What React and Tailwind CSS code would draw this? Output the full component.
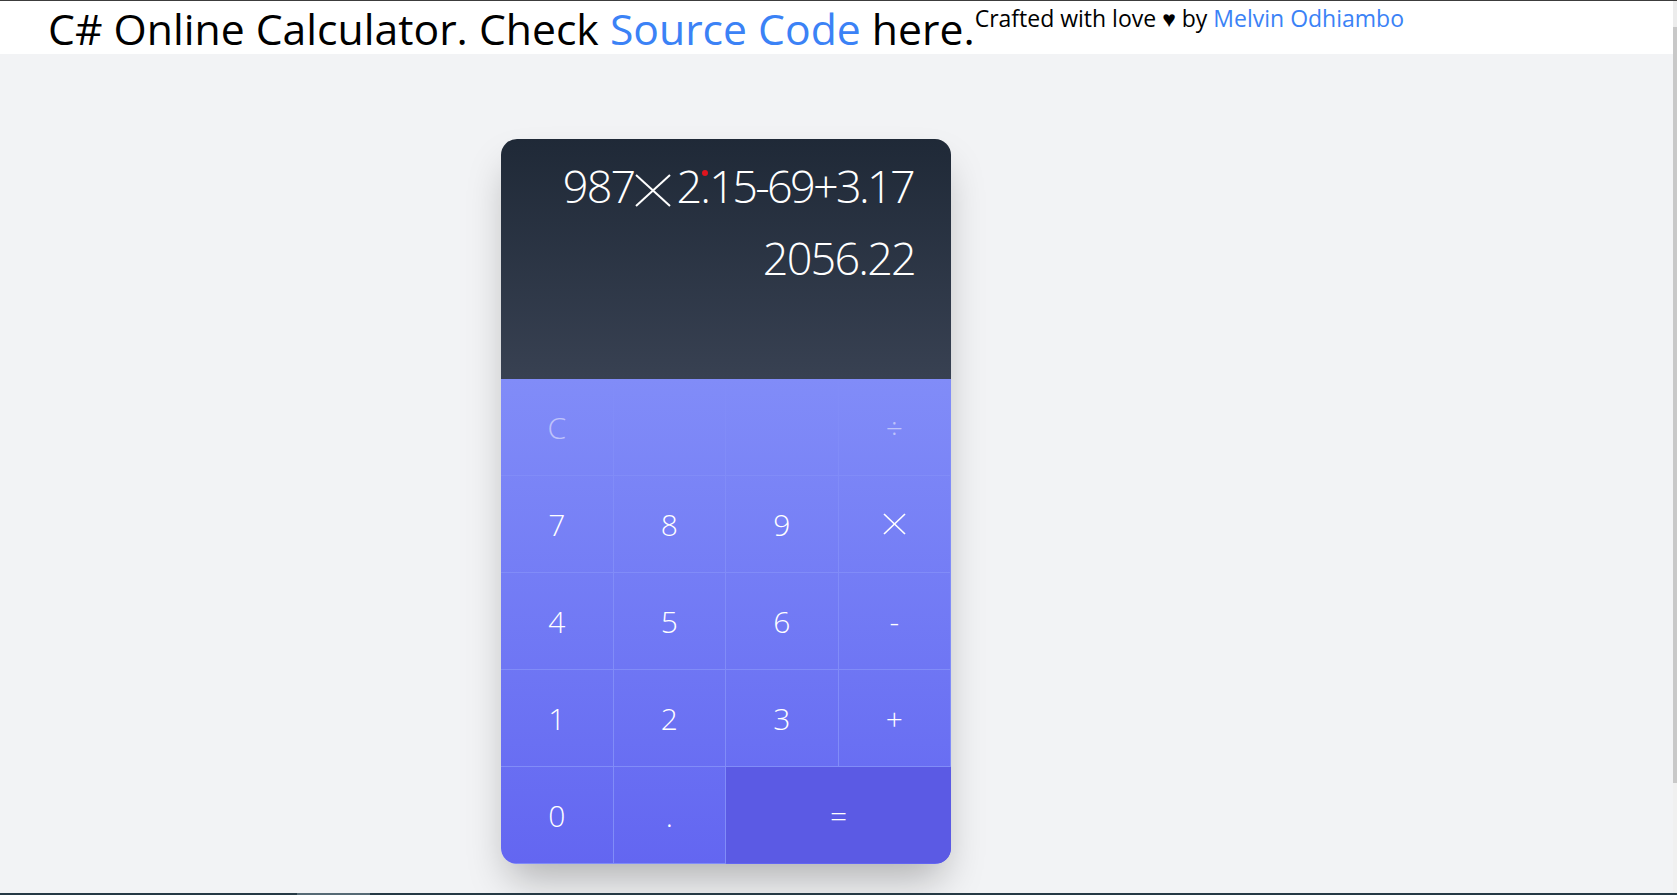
import React from "react";

const Times = ({ className, w, h, stroke }) => (
  <svg
    width={w}
    height={h}
    viewBox={`0 0 ${w} ${h}`}
    className={className}
    fill="none"
    stroke="currentColor"
    strokeWidth={stroke}
    strokeLinecap="butt"
  >
    <line x1="1" y1="1" x2={w - 1} y2={h - 1} />
    <line x1={w - 1} y1="1" x2="1" y2={h - 1} />
  </svg>
);

const keys = [
  { label: "C", faded: true },
  { label: "" },
  { label: "" },
  { label: "÷", faded: true },
  { label: "7" },
  { label: "8" },
  { label: "9" },
  { label: "x", icon: true },
  { label: "4" },
  { label: "5" },
  { label: "6" },
  { label: "-" },
  { label: "1" },
  { label: "2" },
  { label: "3" },
  { label: "+" },
  { label: "0" },
  { label: "." },
];

const App = () => {
  return (
    <div className="h-screen flex flex-col border-t border-[#3c3c3c] bg-[#f2f3f5] font-['Open_Sans','Noto_Sans',sans-serif] overflow-hidden">
      <div className="flex flex-1 min-h-0">
        <div className="flex-1 flex flex-col">
          <header className="h-[53px] bg-white flex items-start pl-[48px] text-black">
            <h1 className="text-[42.7px] leading-[55px] font-normal whitespace-nowrap">
              C# Online Calculator. Check{" "}
              <a href="#" className="text-[#3b82f6]">
                Source Code
              </a>{" "}
              here.
            </h1>
            <p className="text-[23px] leading-[35px] whitespace-nowrap">
              Crafted with love ♥ by{" "}
              <a href="#" className="text-[#3b82f6]">
                Melvin Odhiambo
              </a>
            </p>
          </header>

          <main className="flex-1 pt-[85px] pl-[501px]">
            <section className="w-[450px] rounded-2xl overflow-hidden shadow-[0_22px_40px_-8px_rgba(0,0,0,0.28)]">
              <div className="h-[240px] bg-gradient-to-b from-[#1f2937] to-[#384152] pt-[11px] pr-[36px] text-right text-white font-light text-[45px] leading-[72px] tracking-[-0.04em]">
                <div className="whitespace-nowrap">
                  987
                  <Times w={36} h={33} stroke={2} className="inline-block mr-[5px] ml-[1px]" />
                  2
                  <span className="relative">
                    .
                    <span className="absolute left-1/2 -translate-x-1/2 top-[15px] size-[6px] rounded-full bg-[#e0141e]" />
                  </span>
                  <span className="tracking-[-0.06em] mr-[2px]">15-69+3.17</span>
                </div>
                <div>2056.22</div>
              </div>

              <div className="grid grid-cols-4 bg-gradient-to-b from-[#818cf8] to-[#6366f1] text-white font-light text-[30px]">
                {keys.map((k, i) => (
                  <button
                    key={i}
                    className={`h-[97px] flex items-center justify-center border-r border-b border-[#818cf8] ${
                      k.faded ? "text-white/50" : ""
                    }`}
                  >
                    {k.icon ? <Times w={23} h={22} stroke={1.7} /> : k.label}
                  </button>
                ))}
                <button className="col-span-2 h-[97px] flex items-center justify-center bg-[#5b5ae4] border-l border-t border-[#818cf8] -ml-px -mt-px">
                  =
                </button>
              </div>
            </section>
          </main>
        </div>

        <div className="w-[4px] bg-[#f0f0f0] flex flex-col">
          <div className="h-[26px] bg-[#ececec]" />
          <div className="h-[756px] bg-[#c8c8c8]" />
        </div>
      </div>

      <div className="flex h-[2px]">
        <div className="w-[297px] bg-[#263a45]" />
        <div className="w-[73px] bg-[#566a75]" />
        <div className="flex-1 bg-[#263a45]" />
      </div>
    </div>
  );
};

export default App;
